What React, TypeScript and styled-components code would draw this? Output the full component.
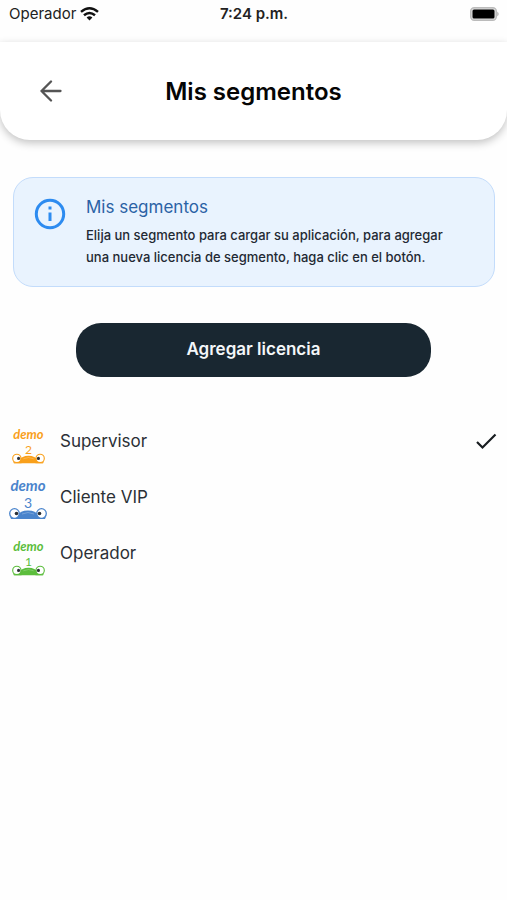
import React from "react";
import styled, { createGlobalStyle } from "styled-components";

const GlobalStyle = createGlobalStyle`
  *, *::before, *::after { box-sizing: border-box; }
  body {
    margin: 0;
    background: #fefefe;
    color: #1f2933;
    font-family: Inter, "Liberation Sans", sans-serif;
  }
`;

const Screen = styled.div`
  min-height: 100vh;
  display: flex;
  flex-direction: column;
`;

const StatusBar = styled.div`
  display: grid;
  grid-template-columns: 1fr auto 1fr;
  align-items: center;
  height: 42px;
  padding: 0 8px 14px 9px;
  font-size: 15px;
  line-height: 20px;
  color: #222;
`;

const Carrier = styled.div`
  display: flex;
  align-items: center;
  gap: 4px;
`;

const Clock = styled.time`
  font-weight: 600;
`;

const BatteryIcon = styled.svg`
  justify-self: end;
`;

const Header = styled.header`
  display: grid;
  grid-template-columns: 32px 1fr 32px;
  align-items: center;
  height: 98px;
  padding: 0 35px;
  border-radius: 0 0 30px 30px;
  background: #fff;
  box-shadow: 0 3px 9px rgba(0, 0, 0, 0.24);
`;

const IconButton = styled.button`
  display: grid;
  place-items: center;
  width: 32px;
  height: 32px;
  padding: 0;
  border: 0;
  background: none;
  color: #555;
  cursor: pointer;
`;

const Title = styled.h1`
  margin: 0;
  padding-top: 2px;
  font-size: 24px;
  font-weight: 600;
  line-height: 32px;
  text-align: center;
  color: #050505;
`;

const Content = styled.main`
  display: flex;
  flex-direction: column;
  padding-top: 37px;
`;

const Notice = styled.section`
  display: flex;
  gap: 20px;
  margin: 0 12px 0 13px;
  padding: 17px 36px 18px 20px;
  border: 1px solid #c3dcfb;
  border-radius: 20px;
  background: #e9f3fe;
`;

const NoticeIcon = styled.svg`
  flex: none;
  margin-top: 3px;
`;

const NoticeTitle = styled.h2`
  margin: 0 0 5px;
  font-size: 17px;
  font-weight: 400;
  line-height: 24px;
  color: #2b62a5;
`;

const NoticeText = styled.p`
  margin: 0;
  font-size: 13px;
  font-weight: 500;
  line-height: 22px;
`;

const AddButton = styled.button`
  width: 70%;
  height: 54px;
  margin: 36px auto 0;
  padding: 0 0 2px;
  border: 0;
  border-radius: 25px;
  background: #192731;
  color: #f4f7f9;
  font-family: inherit;
  font-size: 17px;
  font-weight: 600;
  cursor: pointer;
`;

const SegmentList = styled.ul`
  margin: 36px 0 0;
  padding: 0;
  list-style: none;
`;

const SegmentButton = styled.button`
  display: grid;
  grid-template-columns: 40px 1fr 24px;
  align-items: center;
  gap: 12px;
  width: 100%;
  height: 56px;
  padding: 0 8px;
  border: 0;
  background: none;
  color: #2b3036;
  font-family: inherit;
  font-size: 17px;
  line-height: 24px;
  text-align: left;
  cursor: pointer;
`;

const SegmentName = styled.span`
  padding-bottom: 1px;
`;

const Logo = styled.svg`
  justify-self: center;
  align-self: end;
  margin-bottom: 5px;
`;

const LogoText = styled.text`
  font-family: Lato, sans-serif;
`;

type Segment = { name: string; digit: string; color: string; large?: boolean; selected?: boolean };

const segments: Segment[] = [
  { name: "Supervisor", digit: "2", color: "#f9a01b", selected: true },
  { name: "Cliente VIP", digit: "3", color: "#4a84cc", large: true },
  { name: "Operador", digit: "1", color: "#5bbd3c" },
];

function DemoLogo({ digit, color, large }: Omit<Segment, "name">) {
  return (
    <Logo width={large ? 40 : 35} height={large ? 44 : 38} viewBox="0 0 40 44" fill={color} aria-hidden="true">
      <LogoText x="20" y="15" fontSize="15" fontWeight="700" fontStyle="italic" textAnchor="middle">demo</LogoText>
      <LogoText x="20" y="32" fontSize="14" textAnchor="middle">{digit}</LogoText>
      <path d="M3 43 C8 43 9 34.500 20 34.500 C31 34.500 32 43 37 43 Z" />
      <path d="M14 38 Q20 35 26 38" fill="none" stroke="#fff" strokeOpacity="0.25" />
      <circle cx="6.500" cy="37.500" r="4.800" fill="#fff" stroke={color} strokeWidth="1.300" />
      <circle cx="33.500" cy="37.500" r="4.800" fill="#fff" stroke={color} strokeWidth="1.300" />
      <path d="M2 40.500 Q6.500 44 11 40.500 L12 43 H3Z M38 40.500 Q33.500 44 29 40.500 L28 43 H37Z" />
      <circle cx="8.500" cy="37.500" r="1.800" fill="#2b3036" />
      <circle cx="31.500" cy="37.500" r="1.800" fill="#2b3036" />
    </Logo>
  );
}

export default function App() {
  return (
    <Screen>
      <GlobalStyle />
      <StatusBar>
        <Carrier>
          <span>Operador</span>
          <svg width="19" height="14" viewBox="0 0 19 14" fill="none" stroke="#111" strokeWidth="2.500" aria-label="Wi-Fi">
            <path d="M1 4.900 Q9.500 -2.300 18 4.900" />
            <path d="M4 8.300 Q9.500 3.600 15 8.300" />
            <path d="M6.600 10.400 Q9.500 8 12.400 10.400 L9.500 13.500Z" fill="#111" stroke="none" />
          </svg>
        </Carrier>
        <Clock>7:24 p.m.</Clock>
        <BatteryIcon width="30" height="14" viewBox="0 0 30 14" aria-label="Batería">
          <rect x="1.700" y="0.700" width="25.600" height="12.600" rx="3.500" fill="#ddd" stroke="#bbb" strokeWidth="1.400" />
          <rect x="3.500" y="2.500" width="22" height="9" rx="1.500" fill="#000" />
          <path d="M28.300 4.500 Q31 7 28.300 9.500Z" fill="#aaa" />
        </BatteryIcon>
      </StatusBar>
      <Header>
        <IconButton aria-label="Volver">
          <svg width="22" height="22" viewBox="0 0 22 22" fill="none" stroke="currentColor" strokeWidth="2.300" strokeLinecap="round" strokeLinejoin="round" aria-hidden="true">
            <path d="M20.500 11H1.500M11 1.500L1.500 11l9.500 9.500" />
          </svg>
        </IconButton>
        <Title>Mis segmentos</Title>
      </Header>
      <Content>
        <Notice>
          <NoticeIcon width="32" height="32" viewBox="0 0 32 32" fill="none" stroke="#2d8bf0" strokeWidth="3" aria-hidden="true">
            <circle cx="16" cy="16" r="13.700" />
            <path d="M16 14.500v8.500M16 8.500v3" />
          </NoticeIcon>
          <div>
            <NoticeTitle>Mis segmentos</NoticeTitle>
            <NoticeText>
              Elija un segmento para cargar su aplicación, para agregar una nueva licencia de segmento, haga clic en el botón.
            </NoticeText>
          </div>
        </Notice>
        <AddButton>Agregar licencia</AddButton>
        <SegmentList>
          {segments.map(({ name, ...logo }) => (
            <li key={name}>
              <SegmentButton aria-pressed={Boolean(logo.selected)}>
                <DemoLogo {...logo} />
                <SegmentName>{name}</SegmentName>
                {logo.selected && (
                  <svg width="24" height="24" viewBox="0 0 24 24" fill="none" stroke="#181d20" strokeWidth="2.200" aria-hidden="true">
                    <path d="M2 13l5.500 5.500L20.500 5.500" />
                  </svg>
                )}
              </SegmentButton>
            </li>
          ))}
        </SegmentList>
      </Content>
    </Screen>
  );
}
